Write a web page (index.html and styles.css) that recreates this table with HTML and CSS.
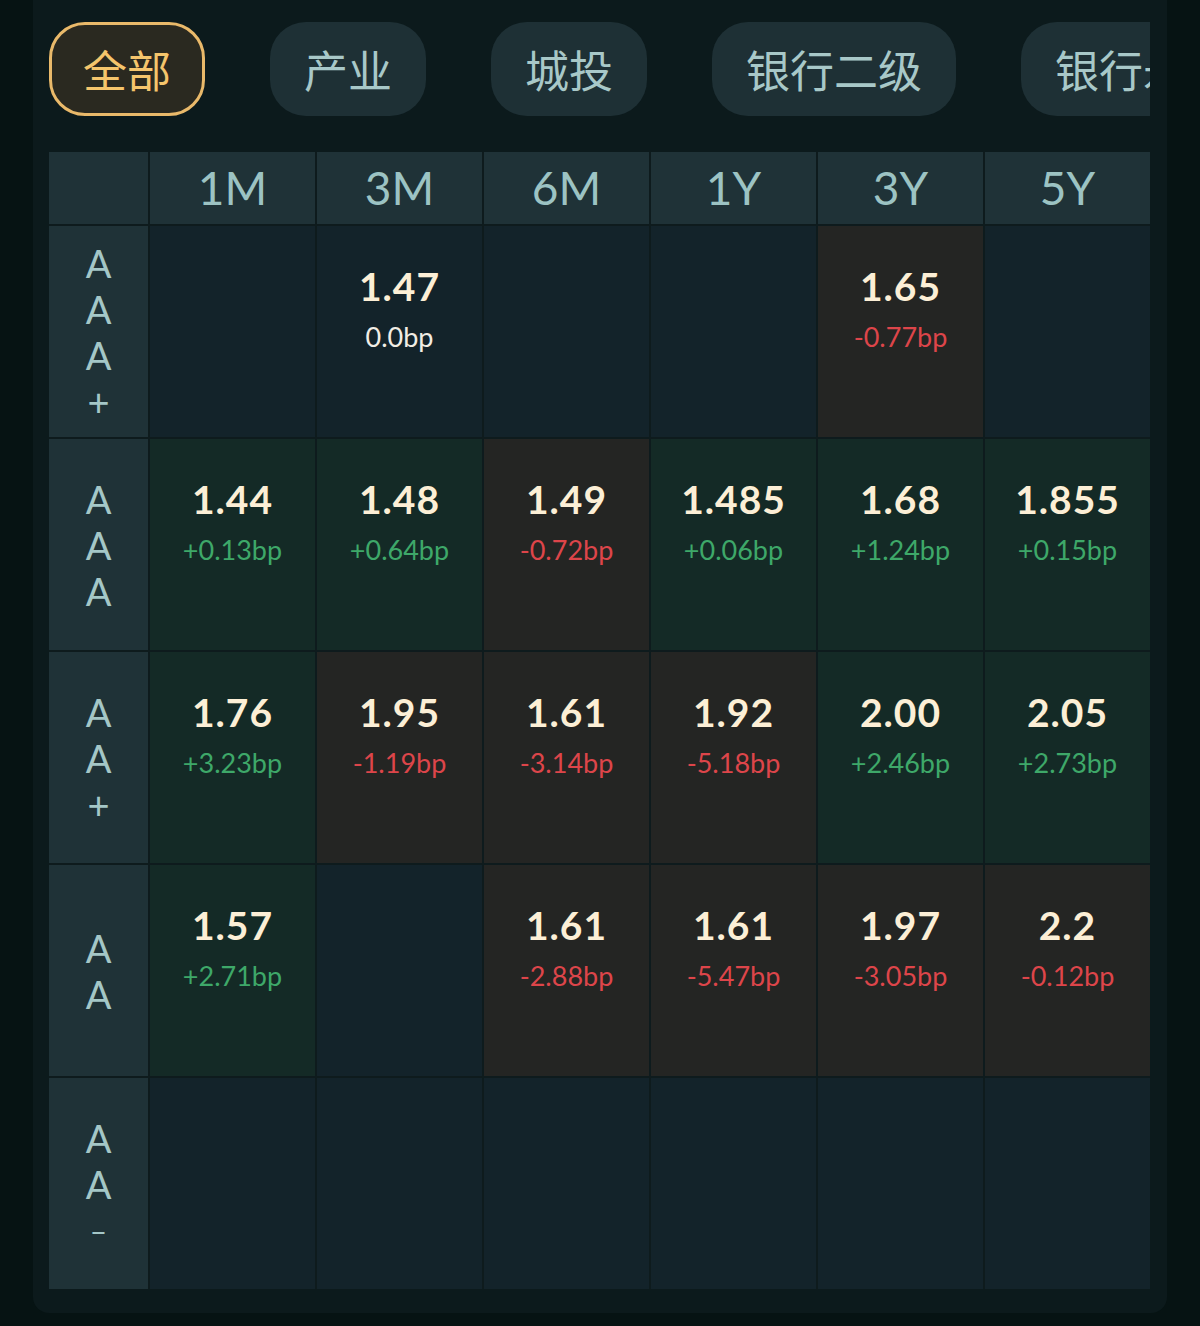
FILE: index.html
```html
<!DOCTYPE html>
<html lang="zh-CN">

<head>
    <meta charset="UTF-8">
    <meta name="viewport" content="width=device-width, initial-scale=1.0">
    <title>信用债收益率</title>
    <link rel="stylesheet" href="styles.css">
</head>

<body>

    <div class="panel">

        <div class="tabs">
            <div class="tab active">全部</div>
            <div class="tab">产业</div>
            <div class="tab">城投</div>
            <div class="tab">银行二级</div>
            <div class="tab">银行永续</div>
        </div>

        <div class="grid">
            <div class="head"></div>
            <div class="head">1M</div>
            <div class="head">3M</div>
            <div class="head">6M</div>
            <div class="head">1Y</div>
            <div class="head">3Y</div>
            <div class="head">5Y</div>

            <!-- AAA+ -->
            <div class="rating"><span>A</span><span>A</span><span>A</span><span>+</span></div>
            <div class="cell"></div>
            <div class="cell"><b>1.47</b><i class="flat">0.0bp</i></div>
            <div class="cell"></div>
            <div class="cell"></div>
            <div class="cell down"><b>1.65</b><i>-0.77bp</i></div>
            <div class="cell"></div>

            <!-- AAA -->
            <div class="rating"><span>A</span><span>A</span><span>A</span></div>
            <div class="cell up"><b>1.44</b><i>+0.13bp</i></div>
            <div class="cell up"><b>1.48</b><i>+0.64bp</i></div>
            <div class="cell down"><b>1.49</b><i>-0.72bp</i></div>
            <div class="cell up"><b>1.485</b><i>+0.06bp</i></div>
            <div class="cell up"><b>1.68</b><i>+1.24bp</i></div>
            <div class="cell up"><b>1.855</b><i>+0.15bp</i></div>

            <!-- AA+ -->
            <div class="rating"><span>A</span><span>A</span><span>+</span></div>
            <div class="cell up"><b>1.76</b><i>+3.23bp</i></div>
            <div class="cell down"><b>1.95</b><i>-1.19bp</i></div>
            <div class="cell down"><b>1.61</b><i>-3.14bp</i></div>
            <div class="cell down"><b>1.92</b><i>-5.18bp</i></div>
            <div class="cell up"><b>2.00</b><i>+2.46bp</i></div>
            <div class="cell up"><b>2.05</b><i>+2.73bp</i></div>

            <!-- AA -->
            <div class="rating"><span>A</span><span>A</span></div>
            <div class="cell up"><b>1.57</b><i>+2.71bp</i></div>
            <div class="cell"></div>
            <div class="cell down"><b>1.61</b><i>-2.88bp</i></div>
            <div class="cell down"><b>1.61</b><i>-5.47bp</i></div>
            <div class="cell down"><b>1.97</b><i>-3.05bp</i></div>
            <div class="cell down"><b>2.2</b><i>-0.12bp</i></div>

            <!-- AA- -->
            <div class="rating"><span>A</span><span>A</span><span class="dash">–</span></div>
            <div class="cell"></div>
            <div class="cell"></div>
            <div class="cell"></div>
            <div class="cell"></div>
            <div class="cell"></div>
            <div class="cell"></div>
        </div>

    </div>

</body>

</html>
```

FILE: styles.css
```css
body {
    margin: 0;
    padding: 0;
    background: #061313;
    font-family: Lato, "Noto Sans CJK SC", sans-serif;
}

.panel {
    width: 1101px;
    margin-left: 33px;
    padding: 22px 17px 24px 16px;
    background: #0c1a1c;
    border-radius: 0 0 16px 16px;
}

.tabs {
    display: flex;
    gap: 65px;
    overflow: hidden;
    white-space: nowrap;
}

.tab {
    flex-shrink: 0;
    height: 94px;
    box-sizing: border-box;
    padding: 0 34px;
    border-radius: 36px;
    background: #1e3035;
    color: #a8c8c8;
    font-family: "Noto Sans CJK SC", sans-serif;
    font-size: 44px;
    line-height: 94px;
}

.tab.active {
    border: 3px solid #e9b96a;
    background: #2a2920;
    color: #f5c56c;
    line-height: 88px;
    padding: 0 31px;
}

.grid {
    display: grid;
    grid-template-columns: 99px repeat(6, 165px);
    grid-template-rows: 72px repeat(5, 211px);
    gap: 2px;
    margin-top: 36px;
    background: #0e1b1d;
}

.head {
    background: #1f3237;
    color: #9cc3c3;
    font-size: 46px;
    line-height: 72px;
    text-align: center;
}

.rating {
    background: #1f3237;
    color: #a4c7c7;
    font-size: 38px;
    line-height: 46px;
    display: flex;
    flex-direction: column;
    align-items: center;
    justify-content: center;
}

.rating .dash {
    font-size: 30px;
}

.cell {
    background: #13232a;
    display: flex;
    flex-direction: column;
    align-items: center;
    padding-top: 35px;
}

.cell.up {
    background: #142a26;
}

.cell.down {
    background: #242523;
}

.cell b {
    color: #fcefd6;
    font-size: 39px;
    font-weight: 700;
    line-height: 50px;
    letter-spacing: 1px;
}

.cell i {
    font-style: normal;
    font-size: 27px;
    line-height: 52px;
}

.cell i.flat {
    color: #f1ede4;
}

.up i {
    color: #3ea869;
}

.down i {
    color: #dd454a;
}
```
